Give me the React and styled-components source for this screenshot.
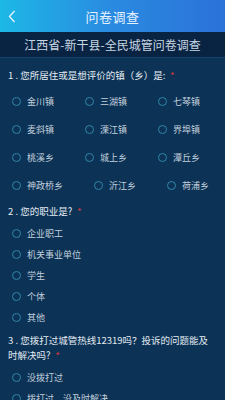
import styled, { createGlobalStyle } from "styled-components";

const GlobalStyle = createGlobalStyle`
  * { box-sizing: border-box; }
  body {
    margin: 0;
    background: #0c3356;
    font-family: "Noto Sans CJK SC", "Noto Sans", sans-serif;
  }
`;

const questions = [
  {
    no: 1,
    title: "您所居住或是想评价的镇（乡）是:",
    grid: true,
    options: [
      "金川镇", "三湖镇", "七琴镇",
      "麦斜镇", "溧江镇", "界埠镇",
      "桃溪乡", "城上乡", "潭丘乡",
      "神政桥乡", "沂江乡", "荷浦乡",
    ],
  },
  {
    no: 2,
    title: "您的职业是?",
    options: ["企业职工", "机关事业单位", "学生", "个体", "其他"],
  },
  {
    no: 3,
    title: "您拨打过城管热线12319吗？投诉的问题能及时解决吗?",
    options: ["没拨打过", "拨打过，没及时解决", "拨打过，及时解决"],
  },
];

export default function App() {
  return (
    <Page>
      <GlobalStyle />
      <Header>
        <Back>
          <svg width="8" height="13" viewBox="0 0 8 13">
            <path d="M6.5 1 L1.5 6.5 L6.5 12" fill="none" stroke="#e8f4ff" strokeWidth="1.3" />
          </svg>
        </Back>
        <Title>问卷调查</Title>
      </Header>
      <SubHeader>江西省-新干县-全民城管问卷调查</SubHeader>
      <Body>
        {questions.map((q) => (
          <Question key={q.no}>
            <QTitle>
              {q.no} . {q.title}
              <Star>*</Star>
            </QTitle>
            <Options $grid={q.grid}>
              {q.options.map((o) => (
                <Option key={o} $grid={q.grid}>
                  <Radio />
                  <span>{o}</span>
                </Option>
              ))}
            </Options>
          </Question>
        ))}
      </Body>
    </Page>
  );
}

const Page = styled.div`
  width: 225px;
  height: 400px;
  overflow: hidden;
  background: #0c3356;
`;

const Header = styled.div`
  position: relative;
  height: 32px;
  display: flex;
  align-items: center;
  justify-content: center;
  background: linear-gradient(90deg, #1db8e6 0%, #2a8ae0 50%, #2b72d9 100%);
`;

const Back = styled.div`
  position: absolute;
  left: 8px;
  top: 10px;
  display: flex;
`;

const Title = styled.div`
  color: #e6f2ff;
  font-size: 13px;
  letter-spacing: 0.5px;
`;

const SubHeader = styled.div`
  height: 26px;
  display: flex;
  align-items: center;
  justify-content: center;
  background: #092442;
  border-bottom: 1px solid #15436a;
  color: #c9d6e3;
  font-size: 12px;
`;

const Body = styled.div`
  padding: 10px 4px 0 8px;
  display: flex;
  flex-direction: column;
  gap: 5px;
`;

const Question = styled.div`
  display: flex;
  flex-direction: column;
  gap: 4px;
`;

const QTitle = styled.div`
  color: #e4ebf2;
  font-size: 9.5px;
  line-height: 15px;
  padding-right: 10px;
`;

const Star = styled.span`
  color: #e03a3a;
  margin-left: 5px;
  font-size: 9px;
`;

const Options = styled.div`
  display: flex;
  flex-direction: ${(p) => (p.$grid ? "row" : "column")};
  flex-wrap: wrap;
  column-gap: 31px;
  padding-left: 4px;
`;

const Option = styled.div`
  display: flex;
  align-items: center;
  gap: 6px;
  height: ${(p) => (p.$grid ? "28px" : "21px")};
  color: #c2cfdc;
  font-size: 9px;
`;

const Radio = styled.span`
  width: 9px;
  height: 9px;
  border-radius: 50%;
  border: 1px solid #2f86a8;
  flex-shrink: 0;
`;
